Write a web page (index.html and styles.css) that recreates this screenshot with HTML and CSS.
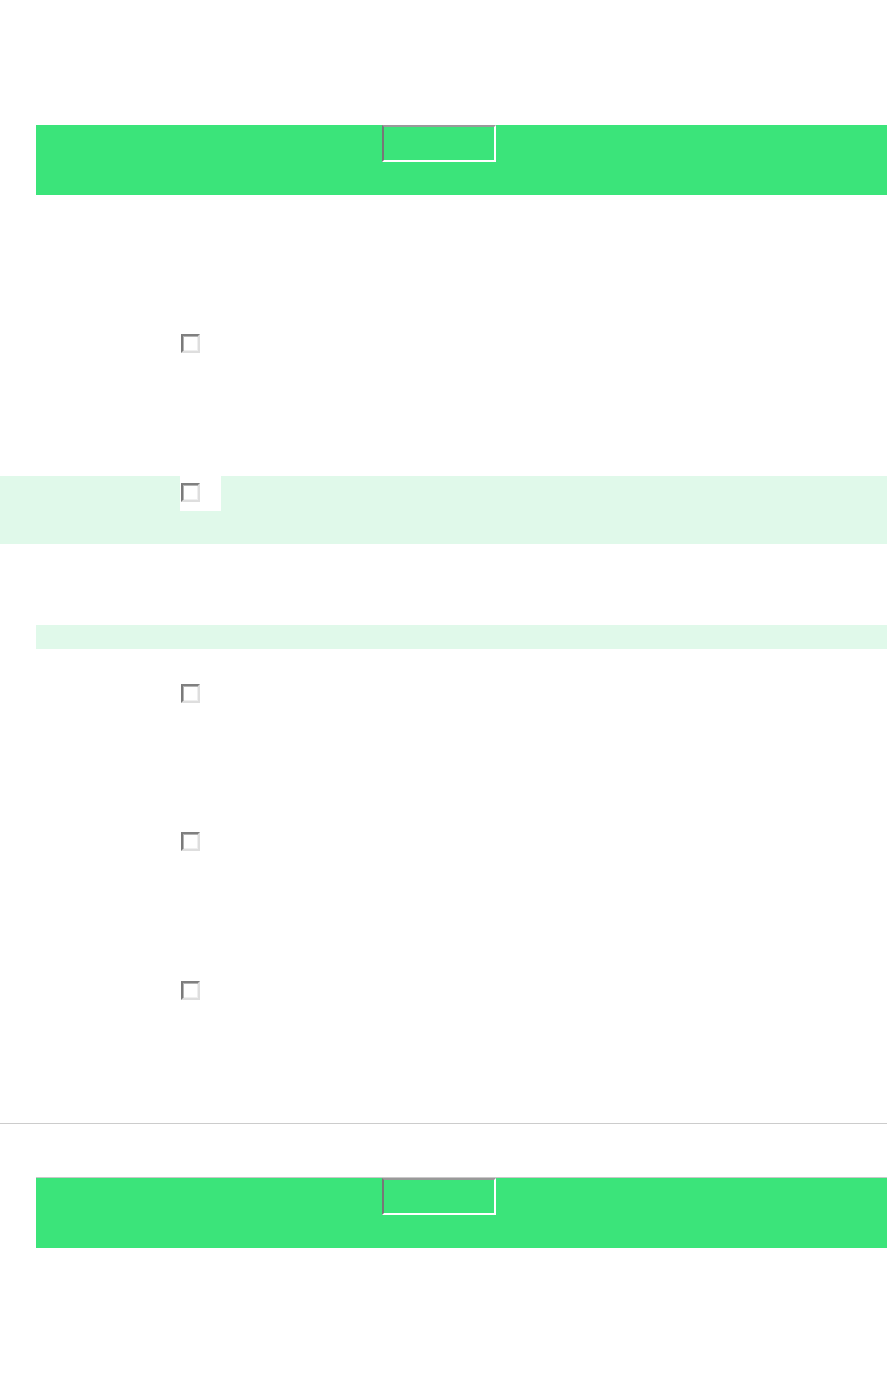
FILE: index.html
```html
<!DOCTYPE html>
<html>
<head>
<meta charset="utf-8">
<link rel="stylesheet" href="styles.css">
</head>
<body>
<div class="page">
  <div class="bar bar-first">
    <input class="field" type="text" aria-label="field">
  </div>
  <div class="list">
    <div class="row"><div class="cell"><span class="box"></span></div></div>
    <div class="row row-hl"><div class="cell cell-white"><span class="box"></span></div></div>
  </div>
  <div class="strip"></div>
  <div class="list list-second">
    <div class="row"><div class="cell"><span class="box"></span></div></div>
    <div class="row"><div class="cell"><span class="box"></span></div></div>
    <div class="row row-last"><div class="cell"><span class="box"></span></div></div>
  </div>
  <div class="rule"></div>
  <div class="bar bar-second">
    <input class="field" type="text" aria-label="field">
  </div>
</div>
</body>
</html>
```
FILE: styles.css
```css
html, body {
  margin: 0;
  padding: 0;
  background: #ffffff;
  font-family: "Liberation Sans", Arial, sans-serif;
}
.page {
  display: flex;
  flex-direction: column;
  width: 887px;
  min-height: 1377px;
  padding-top: 125px;
  box-sizing: border-box;
}
.bar {
  margin-left: 36px;
  height: 70px;
  background: #3be47a;
  display: flex;
  align-items: flex-start;
  padding-left: 346px;
  box-sizing: border-box;
}
.field {
  width: 114px;
  height: 37px;
  box-sizing: border-box;
  margin: 0;
  padding: 0;
  background: transparent;
  border-style: solid;
  border-width: 2px;
  border-top-color: #999999;
  border-left-color: #777777;
  border-right-color: #ffffff;
  border-bottom-color: #ffffff;
  outline: none;
}
.list {
  display: flex;
  flex-direction: column;
  gap: 81px;
  margin-top: 132px;
}
.list-second {
  margin-top: 28px;
  gap: 80px;
}
.row {
  height: 68px;
  padding-left: 180px;
  display: flex;
  align-items: flex-start;
}
.row-last {
  margin-top: 1px;
}
.row-hl {
  background: #e0f9ea;
}
.cell {
  width: 41px;
  height: 35px;
  box-sizing: border-box;
  padding: 7px 0 0 1px;
}
.cell-white {
  background: #ffffff;
}
.box {
  display: block;
  width: 19px;
  height: 19px;
  box-sizing: border-box;
  background: #ffffff;
  border-style: solid;
  border-width: 2px;
  border-top-color: #808080;
  border-left-color: #7a7a7a;
  border-right-color: #dedede;
  border-bottom-color: #dedede;
  box-shadow: inset 1px 1px 0 #b4b4b4, inset -1px -1px 0 #efefef;
}
.strip {
  margin-top: 81px;
  margin-left: 36px;
  height: 24px;
  background: #e0f9ea;
}
.rule {
  margin-top: 81px;
  height: 1px;
  background: #cccccc;
}
.bar-second {
  margin-top: 53px;
  border-top: 1px solid #c8c8c8;
  height: 71px;
}
```
